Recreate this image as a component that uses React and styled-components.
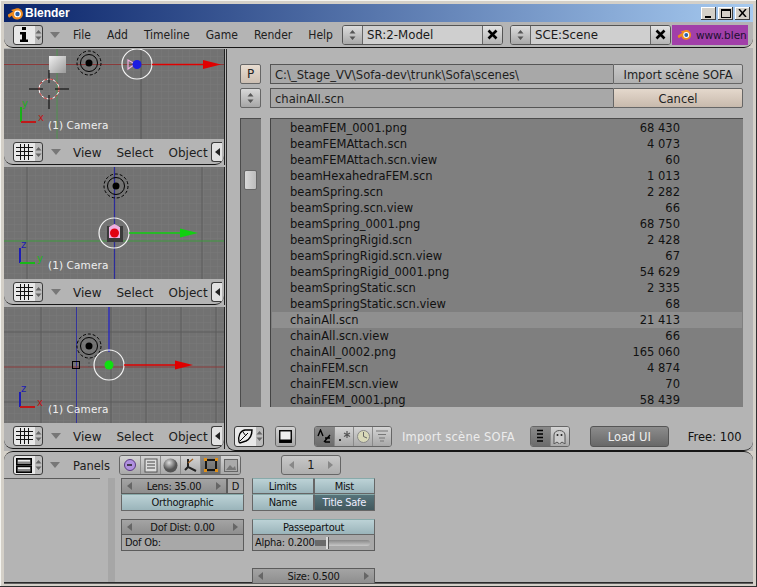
import React from "react";
import styled, { createGlobalStyle, css } from "styled-components";

const Global = createGlobalStyle`
  html, body { margin: 0; padding: 0; background: #d4d0c8; }
  * { box-sizing: border-box; }
  #root { width: 757px; height: 587px; overflow: hidden; }
`;

const UI = `"DejaVu Sans", "Liberation Sans", sans-serif`;
const COND = `"DejaVu Sans Condensed", "DejaVu Sans", "Liberation Sans", sans-serif`;

const Win = styled.div`
  width: 757px; height: 587px; padding: 4px; background: #d4d0c8;
  box-shadow: inset -1px -1px #303030, inset 1px 1px #f4f4f0;
  display: flex; flex-direction: column; overflow: hidden;
  font: 11.5px/16px ${UI}; color: #1a1a1a;
`;
const TitleBar = styled.div`
  height: 18px; flex: none; display: flex; align-items: center; padding: 0 3px 0 3px;
  background: linear-gradient(90deg, #0a246a 0%, #a6caf0 100%);
`;
const TitleText = styled.span`
  font: bold 12px/18px "Liberation Sans", sans-serif; color: #fff; margin-left: 1px; flex: 1;
`;
const WinBtn = styled.div`
  width: 15px; height: 13px; margin-left: 2px; background: #d4d0c8;
  box-shadow: inset -1px -1px #404040, inset 1px 1px #fff;
  display: flex; align-items: center; justify-content: center;
`;
const HeaderBar = styled.div`
  flex: none; height: ${p => p.$h || 26}px; background: #b4b4b4; display: flex; align-items: center;
  padding-left: 9px; position: relative; overflow: hidden;
  border-bottom: 1px solid #161616;
  border-radius: 0 0 9px 9px;
`;
const Selector = styled.div`
  width: 30px; height: 20px; flex: none; border: 1px solid #3c3c3c; border-radius: 3px;
  background: linear-gradient(90deg, #e8e8e8 0 21px, #bcbcbc 21px);
  display: flex; align-items: center; overflow: hidden;
`;
const SelectorIcon = styled.div`
  width: 21px; height: 18px; display: flex; align-items: center; justify-content: center;
`;
const Caret = styled.div`
  width: 0; height: 0; flex: none; margin: 0 ${p => p.$mr ?? 13}px 0 ${p => p.$ml ?? 7}px;
  border-left: 5px solid transparent; border-right: 5px solid transparent; border-top: 6px solid #777;
`;
const MenuRow = styled.div`
  display: flex; flex: none; gap: ${p => p.$gap}px; margin-top: ${p => p.$mt || 0}px;
  font: ${p => p.$font || `12px/16px ${UI}`};
`;
const MenuItem = styled.span` color: #202020; white-space: nowrap; `;
const NameField = styled.div`
  flex: none; width: ${p => p.$w}px; height: 20px; margin-left: ${p => p.$ml || 0}px; display: flex;
  border: 1px solid #555; border-radius: 3px; overflow: hidden; background: #cfcfcf;
`;
const UpDown = styled.div`
  width: ${p => p.$w || 20}px; flex: none; display: flex; align-items: center; justify-content: center;
  background: linear-gradient(#dcdcdc, #a8a8a8); border-right: 1px solid #666;
`;
const NameText = styled.span`
  flex: 1; padding-left: 4px; line-height: 19px; font-size: 11.8px; white-space: nowrap; overflow: hidden;
`;
const CloseBtn = styled.div`
  width: 20px; flex: none; border-left: 1px solid #666; background: linear-gradient(#e2e2e2, #b4b4b4);
  display: flex; align-items: center; justify-content: center;
`;
const Promo = styled.div`
  width: 76px; height: 20px; flex: none; background: #a13fa9; margin-left: 1px; display: flex; align-items: center;
  white-space: nowrap; padding-left: 5px; gap: 4px; color: #1c1030; font-size: 10.5px;
`;
const PartialBtn = styled.div`
  width: 11px; height: 20px; flex: none; margin-left: auto; margin-right: 2px; border: 1px solid #3c3c3c; border-right: 0;
  border-radius: 3px 0 0 3px; background: #e2e2e2; display: flex; align-items: center; padding-left: 3px;
`;
const Workspace = styled.div`
  flex: none; height: 403px; padding-top: 1px; display: flex; gap: 2px; background: #b4b4b4;
`;
const LeftCol = styled.div`
  width: 220px; flex: none; display: flex; flex-direction: column; gap: 2px; background: #b4b4b4;
`;
const ViewBlock = styled.div`
  flex: none; display: flex; flex-direction: column; box-shadow: 1px 0 #222;
`;
const Viewport = styled.div`
  flex: none; width: 220px; height: ${p => p.$h}px; position: relative; background: #727272; overflow: hidden;
`;
const ViewLabel = styled.span`
  position: absolute; left: 44px; bottom: ${p => p.$b}px; color: #efefef; font-size: 10.5px; line-height: 14px; letter-spacing: .1px; white-space: nowrap;
`;
const FilePanel = styled.div`
  flex: 1; min-width: 0; background: #b4b4b4; display: flex; flex-direction: column; padding: 15px 10px 3px 13px;
  border-left: 1px solid #2a2a2a; border-bottom: 1px solid #161616; border-radius: 0 0 9px 9px; height: 402px;
`;
const FileRow = styled.div`
  display: flex; height: 20px; flex: none; margin-bottom: 4px;
`;
const SmallBtn = styled.div`
  width: 21px; flex: none; margin-right: 9px; border: 1px solid #666; border-radius: 2px; display: flex;
  align-items: center; justify-content: center; color: #222; font-size: 12px;
  background: ${p => p.$pink ? "linear-gradient(#e8dcd0, #cdbfb2)" : "linear-gradient(#d8d8d8, #a6a6a6)"};
`;
const PathField = styled.div`
  flex: 1; min-width: 0; border: 1px solid #555; border-right: 0; background: #a8a8a8; padding-left: 4px; line-height: 20px; color: #1e1e1e; font-size: 11.6px; white-space: nowrap; overflow: hidden;
`;
const ActionBtn = styled.div`
  width: 130px; flex: none; text-align: center; line-height: 20px; border: 1px solid #666; border-radius: 0 2px 2px 0; color: #222;
  background: ${p => p.$pink ? "linear-gradient(#e4d8cc, #c8baad)" : "linear-gradient(#c8c8c8, #b0b0b0)"};
`;
const ListArea = styled.div`
  display: flex; flex: none; height: 289px; margin-top: 6px;
`;
const ScrollCol = styled.div`
  width: 21px; flex: none; margin-right: 9px; background: #7c7c7c; border: 1px solid #4c4c4c; border-bottom: 0; border-right: 0; padding: 51px 0 0 3px;
`;
const Thumb = styled.div`
  width: 13px; height: 20px; background: linear-gradient(90deg, #d8d8d8, #bcbcbc); border: 1px solid #666; border-radius: 2px;
`;
const List = styled.div`
  flex: 1; min-width: 0; background: #7f7f7f; border-top: 1px solid #4c4c4c; border-left: 1px solid #444; padding-top: 1px; overflow: hidden;
`;
const Row = styled.div`
  height: 16px; display: flex; line-height: 16px; color: #111; margin: 0 1px; padding: 0 62px 0 18px;
  ${p => p.$on && css`background: #8f8f8f;`}
`;
const RowName = styled.span` flex: 1; white-space: nowrap; `;
const RowSize = styled.span` white-space: nowrap; `;
const Footer = styled.div`
  height: 22px; flex: none; margin-top: 18px; margin-left: -6px; display: flex; align-items: center; white-space: nowrap;
`;
const IconSelect = styled(Selector)` width: 30px; height: 21px; `;
const IconGroup = styled.div`
  display: flex; flex: none; margin-left: ${p => p.$ml}px; border: 1px solid #666; border-radius: 3px; overflow: hidden; height: ${p => p.$h || 21}px;
`;
const IconCell = styled.div`
  width: ${p => p.$w || 19}px; display: flex; align-items: center; justify-content: center;
  background: ${p => p.$on ? "linear-gradient(#8a8a8a, #6c6c6c)" : "linear-gradient(#d4d4d4, #a8a8a8)"};
  & + & { border-left: 1px solid #8a8a8a; }
`;
const FooterTitle = styled.span` color: #ececec; margin: 2px 0 0 10px; letter-spacing: .22px; `;
const LoadBtn = styled.div`
  width: 79px; height: 21px; margin-left: 20px; border: 1px solid #555; border-radius: 3px; color: #eee; text-align: center; line-height: 20px;
  background: linear-gradient(#8c8c8c, #686868);
`;
const FreeText = styled.span` margin: 2px 0 0 19px; color: #111; `;
const BottomHeader = styled(HeaderBar)`
  height: 27px; border-bottom: 0; border-radius: 9px 9px 0 0;
  border-top: 1px solid #161616;
`;
const PanelsLabel = styled(MenuItem)` margin-top: 2px; `;
const PageBox = styled.div`
  width: 60px; height: 20px; margin-left: 40px; flex: none; border: 1px solid #666; border-radius: 3px; display: flex; align-items: center;
  justify-content: space-between; padding: 0 7px; background: linear-gradient(#c8c8c8, #aeaeae);
`;
const Props = styled.div`
  flex: 1; min-height: 0; display: flex; background: #b4b4b4; border-bottom: 1px solid #2a2a2a; box-shadow: 0 1px #606060;
`;
const PropSpacer = styled.div`
  width: 104px; flex: none; position: relative;
  &::before { content: ""; position: absolute; left: 0; top: 0; width: 96px; height: 1px; background: #5a5a5a; }
`;
const PropStrip = styled.div` width: 7px; flex: none; background: #a6a6a6; `;
const PropGrid = styled.div`
  flex: 1; display: grid; grid-template-columns: 123px 123px; column-gap: 8px; padding-left: 6px; align-content: start;
  font: 11px/15px ${COND}; letter-spacing: -.28px;
`;
const PropCol = styled.div` display: flex; flex-direction: column; `;
const BtnRow = styled.div`
  display: flex; height: ${p => p.$h || 16}px; margin-top: ${p => p.$mt || 0}px; flex: none;
`;
const TealBtn = styled.div`
  flex: 1; text-align: center; border: 1px solid #666; border-top-color: #8aa; white-space: nowrap; overflow: hidden;
  background: ${p => p.$on ? "linear-gradient(#56747a, #42585e)" : "linear-gradient(#bcd2d6, #9ab4ba)"};
  color: ${p => p.$on ? "#eef" : "#111"};
`;
const NumBtn = styled.div`
  flex: ${p => p.$w ? `0 0 ${p.$w}px` : 1}; display: flex; align-items: center; justify-content: ${p => p.$center ? "center" : "space-between"};
  padding: ${p => p.$center ? 0 : "0 5px"};
  border: 1px solid #5c5c5c; white-space: nowrap; overflow: hidden; color: #111;
  background: ${p => p.$flat ? "#ababab" : "linear-gradient(#a4a4a4, #8e8e8e)"};
`;
const FieldBtn = styled.div`
  flex: 1; border: 1px solid #5c5c5c; border-top: 0; background: #a8a8a8; padding-left: 3px; white-space: nowrap; color: #111;
`;
const SliderBtn = styled(FieldBtn)` padding-left: 2px; display: flex; align-items: center; `;
const SliderTrack = styled.div`
  flex: 1; height: 6px; margin: 0 4px 0 0; position: relative; background: linear-gradient(#888, #c8c8c8); border-radius: 3px;
`;
const SliderFill = styled.div`
  position: absolute; left: 0; top: 0; height: 6px; background: #6a6a6a;
`;
const SliderKnob = styled.div`
  position: absolute; top: -3px; width: 3px; height: 12px; background: #dcdcdc; border-right: 1px solid #555;
`;
const SelArrowWrap = styled.span` margin-left: 1px; display: flex; `;

const Tri = ({ dir, c = "#666" }) => (
  <svg width="5" height="8" viewBox="0 0 5 8" style={{ flex: "none" }}>
    <path d={dir === "l" ? "M5 0V8L0 4Z" : "M0 0V8L5 4Z"} fill={c} />
  </svg>
);
const Arrows = ({ c = "#555" }) => (
  <svg width="7" height="10" viewBox="0 0 7 10"><path d="M3.5 0L6.5 3.5H.5ZM3.5 10L.5 6.5H6.5Z" fill={c} /></svg>
);
const SelArrows = () => <SelArrowWrap><Arrows c="#666" /></SelArrowWrap>;

const GridGlyph = () => (
  <svg width="17" height="16" viewBox="0 0 17 16"><path d="M4.5 0V16M8.5 0V16M12.5 0V16M0 3.5H17M0 7.5H17M0 11.5H17" stroke="#111" strokeWidth="1" /></svg>
);
const InfoGlyph = () => (
  <svg width="10" height="15" viewBox="0 0 10 15"><path d="M3 0h4v3H3zM1 5h6v7.5h2V15H1v-2.5h2V7.5H1z" fill="#000" /></svg>
);
const PanelsGlyph = () => (
  <svg width="16" height="15" viewBox="0 0 16 15"><rect x=".75" y=".75" width="14.5" height="6" fill="#888" stroke="#000" strokeWidth="1.5" /><rect x=".75" y="8.25" width="14.5" height="6" fill="#888" stroke="#000" strokeWidth="1.5" /><rect x="2" y="2" width="12" height="1.5" fill="#eee" /><rect x="2" y="9.5" width="12" height="1.5" fill="#eee" /></svg>
);
const XGlyph = () => <svg width="11" height="11" viewBox="0 0 11 11"><path d="M1.5 1.5L9.5 9.5M9.5 1.5L1.5 9.5" stroke="#000" strokeWidth="2.6" /></svg>;

const BlenderLogo = ({ s = 17 }) => (
  <svg width={s} height={s * 0.82} viewBox="0 0 17 14" style={{ flex: "none" }}>
    <path d="M1 8.5L6 5.5L4 4L9 2.5C12.5 1.5 16 4 16 8C16 11.5 13 13.5 10 13.5C7.5 13.5 5.5 12 5 9.5L2.5 11.5C1.5 12 .5 9 1 8.5Z" fill="#f08a1d" />
    <circle cx="10.5" cy="8" r="3.4" fill="#fff" />
    <circle cx="10.5" cy="8" r="2.2" fill="#2a5fa8" />
  </svg>
);

const Lamp = ({ x, y }) => (
  <g>
    <circle cx={x} cy={y} r="3.5" fill="#000" />
    <circle cx={x} cy={y} r="8.5" fill="none" stroke="#000" strokeWidth="1" />
    <circle cx={x} cy={y} r="12" fill="none" stroke="#000" strokeWidth="1" strokeDasharray="3 2" />
  </g>
);
const Ring = ({ x, y }) => <circle cx={x} cy={y} r="15" fill="none" stroke="#f4f4f4" strokeWidth="1.2" />;
const Arrow = ({ x1, x2, y, c }) => (
  <g>
    <line x1={x1} x2={x2} y1={y} y2={y} stroke={c} strokeWidth="1.4" />
    <path d={`M${x2} ${y - 4.5}L${x2 + 18} ${y}L${x2} ${y + 4.5}Z`} fill={c} />
  </g>
);
const ViewPattern = ({ id }) => (
  <pattern id={id} width="7" height="7" patternUnits="userSpaceOnUse">
    <path d="M7 0H0V7" fill="none" stroke="#797979" strokeWidth="1" />
  </pattern>
);
const Axes = ({ x, y, up, right, uc, rc }) => (
  <g fontFamily="DejaVu Sans" fontSize="10">
    <line x1={x} x2={x} y1={y} y2={y - 15} stroke={uc} strokeWidth="2" />
    <line x1={x} x2={x + 15} y1={y} y2={y} stroke={rc} strokeWidth="2" />
    <text x={x + 1} y={y - 15} fill={uc}>{up}</text>
    <text x={x + 17} y={y - 1} fill={rc}>{right}</text>
  </g>
);

const View1Art = () => (
  <svg width="220" height="90" viewBox="4 49 220 90" style={{ display: "block" }}>
    <defs><ViewPattern id="g1" /><linearGradient id="cube" x1="0" y1="0" x2="1" y2="1"><stop offset="0" stopColor="#f0f0f0" /><stop offset="1" stopColor="#9a9a9a" /></linearGradient></defs>
    <rect x="4" y="49" width="220" height="90" fill="url(#g1)" />
    <line x1="57" x2="57" y1="49" y2="139" stroke="#4f8f4f" strokeWidth="1" />
    <line x1="141" x2="141" y1="49" y2="139" stroke="#555" strokeWidth="1" />
    <line x1="4" x2="224" y1="64.5" y2="64.5" stroke="#8a3a3a" strokeWidth="1" />
    <rect x="49" y="56" width="17" height="17" fill="url(#cube)" />
    <Lamp x={89} y={63} />
    <Ring x={137} y={64} />
    <path d="M128 60L135 64L128 69Z" fill="none" stroke="#f0b0e0" strokeWidth="1.2" />
    <circle cx="137" cy="64.5" r="4.5" fill="#1c1ce0" />
    <Arrow x1={152} x2={203} y={64.5} c="#e00000" />
    <circle cx="49" cy="89" r="10" fill="none" stroke="#fff" strokeWidth="1" />
    <circle cx="49" cy="89" r="10" fill="none" stroke="#c02020" strokeWidth="1" strokeDasharray="3 3" />
    <path d="M49 70V83M49 95V109M29 89H43M55 89H69" stroke="#000" strokeWidth="1" />
    <Axes x={21} y={122} up="y" right="x" uc="#18b018" rc="#c01818" />
  </svg>
);
const View2Art = () => (
  <svg width="220" height="112" viewBox="4 167 220 112" style={{ display: "block" }}>
    <defs><ViewPattern id="g2" /></defs>
    <rect x="4" y="167" width="220" height="112" fill="url(#g2)" />
    <path d="M27 167V279M202 167V279" stroke="#5c5c5c" strokeWidth="1" />
    <line x1="114.5" x2="114.5" y1="167" y2="279" stroke="#2c2c9c" strokeWidth="1.2" />
    <line x1="4" x2="224" y1="241" y2="241" stroke="#3c9c3c" strokeWidth="1" />
    <Lamp x={116} y={186} />
    <Ring x={114} y={233} />
    <rect x="107" y="226" width="16" height="16" fill="#3a3a3a" />
    <path d="M109 227L114.5 224L120 227V238H109Z" fill="#f0b0e0" />
    <circle cx="114.5" cy="233" r="4.5" fill="#e00010" />
    <Arrow x1={129} x2={180} y={233} c="#10d010" />
    <Axes x={20} y={263} up="z" right="y" uc="#1c1cb4" rc="#18b818" />
  </svg>
);
const View3Art = () => (
  <svg width="220" height="116" viewBox="4 307 220 116" style={{ display: "block" }}>
    <defs><ViewPattern id="g3" /></defs>
    <rect x="4" y="307" width="220" height="116" fill="url(#g3)" />
    <path d="M41 307V423M111 307V423M146 307V423M181 307V423M216 307V423M4 332H224M4 402H224" stroke="#5c5c5c" strokeWidth="1" />
    <line x1="76.5" x2="76.5" y1="307" y2="423" stroke="#34349c" strokeWidth="1" />
    <line x1="109" x2="109" y1="307" y2="352" stroke="#2a2ac0" strokeWidth="1.4" />
    <line x1="4" x2="224" y1="367" y2="367" stroke="#8a3a3a" strokeWidth="1" />
    <Lamp x={89} y={346} />
    <line x1="89" x2="89" y1="358" y2="367" stroke="#555" strokeDasharray="2 2" />
    <rect x="72.5" y="361.5" width="7" height="7" fill="none" stroke="#000" strokeWidth="1" />
    <Ring x={109} y={365} />
    <circle cx="109" cy="365" r="4.5" fill="#10e010" />
    <Arrow x1={124} x2={175} y={365} c="#e00000" />
    <Axes x={20} y={407} up="z" right="x" uc="#1c1cb4" rc="#c01818" />
  </svg>
);

const ViewHeader = () => (
  <HeaderBar>
    <Selector><SelectorIcon><GridGlyph /></SelectorIcon><SelArrows /></Selector>
    <Caret $ml={8} $mr={12} />
    <MenuRow $gap={15} $mt={2}>
      <MenuItem>View</MenuItem><MenuItem>Select</MenuItem><MenuItem>Object</MenuItem>
    </MenuRow>
    <PartialBtn><Tri dir="l" c="#222" /></PartialBtn>
  </HeaderBar>
);

const files = [
  ["beamFEM_0001.png", "68 430"], ["beamFEMAttach.scn", "4 073"], ["beamFEMAttach.scn.view", "60"],
  ["beamHexahedraFEM.scn", "1 013"], ["beamSpring.scn", "2 282"], ["beamSpring.scn.view", "66"],
  ["beamSpring_0001.png", "68 750"], ["beamSpringRigid.scn", "2 428"], ["beamSpringRigid.scn.view", "67"],
  ["beamSpringRigid_0001.png", "54 629"], ["beamSpringStatic.scn", "2 335"], ["beamSpringStatic.scn.view", "68"],
  ["chainAll.scn", "21 413"], ["chainAll.scn.view", "66"], ["chainAll_0002.png", "165 060"],
  ["chainFEM.scn", "4 874"], ["chainFEM.scn.view", "70"], ["chainFEM_0001.png", "58 439"],
];

export default function App() {
  return (
    <Win>
      <Global />
      <TitleBar>
        <BlenderLogo s={17} />
        <TitleText>Blender</TitleText>
        <WinBtn><svg width="9" height="9"><rect x="1" y="7" width="6" height="2" fill="#000" /></svg></WinBtn>
        <WinBtn><svg width="10" height="9"><rect x=".5" y=".5" width="9" height="8" fill="none" stroke="#000" /><rect y="0" width="10" height="2" fill="#000" /></svg></WinBtn>
        <WinBtn><svg width="9" height="8"><path d="M1 0L8 8M8 0L1 8" stroke="#000" strokeWidth="1.5" /></svg></WinBtn>
      </TitleBar>

      <HeaderBar>
        <Selector><SelectorIcon><InfoGlyph /></SelectorIcon><SelArrows /></Selector>
        <Caret />
        <MenuRow $gap={16} $mt={1} $font={`12px/16px ${COND}`}>
          <MenuItem>File</MenuItem><MenuItem>Add</MenuItem><MenuItem>Timeline</MenuItem>
          <MenuItem>Game</MenuItem><MenuItem>Render</MenuItem><MenuItem>Help</MenuItem>
        </MenuRow>
        <NameField $w={161} $ml={9}>
          <UpDown><Arrows /></UpDown><NameText>SR:2-Model</NameText><CloseBtn><XGlyph /></CloseBtn>
        </NameField>
        <NameField $w={161} $ml={7}>
          <UpDown><Arrows /></UpDown><NameText>SCE:Scene</NameText><CloseBtn><XGlyph /></CloseBtn>
        </NameField>
        <Promo><BlenderLogo s={15} /><span>www.blen</span></Promo>
      </HeaderBar>

      <Workspace>
        <LeftCol>
          <ViewBlock>
            <Viewport $h={90}><View1Art /><ViewLabel $b={7}>(1) Camera</ViewLabel></Viewport>
            <ViewHeader />
          </ViewBlock>
          <ViewBlock>
            <Viewport $h={112}><View2Art /><ViewLabel $b={7}>(1) Camera</ViewLabel></Viewport>
            <ViewHeader />
          </ViewBlock>
          <ViewBlock>
            <Viewport $h={116}><View3Art /><ViewLabel $b={7}>(1) Camera</ViewLabel></Viewport>
            <ViewHeader />
          </ViewBlock>
        </LeftCol>

        <FilePanel>
          <FileRow>
            <SmallBtn $pink>P</SmallBtn>
            <PathField>C:\_Stage_VV\Sofa-dev\trunk\Sofa\scenes\</PathField>
            <ActionBtn>Import scène SOFA</ActionBtn>
          </FileRow>
          <FileRow>
            <SmallBtn><Arrows /></SmallBtn>
            <PathField>chainAll.scn</PathField>
            <ActionBtn $pink>Cancel</ActionBtn>
          </FileRow>
          <ListArea>
            <ScrollCol><Thumb /></ScrollCol>
            <List>
              {files.map(([n, s]) => (
                <Row key={n} $on={n === "chainAll.scn"}>
                  <RowName>{n}</RowName><RowSize>{s}</RowSize>
                </Row>
              ))}
            </List>
          </ListArea>
          <Footer>
            <IconSelect>
              <SelectorIcon>
                <svg width="17" height="16" viewBox="0 0 17 16"><path d="M2 14C1 8 3 3 8 2L15 2C15 7 13 11 9 13L3 15Z" fill="#eee" stroke="#000" strokeWidth="1.4" /><path d="M3 13L11 5M6 4L9 8" stroke="#000" /></svg>
              </SelectorIcon>
              <SelArrows />
            </IconSelect>
            <IconGroup $ml={11}>
              <IconCell $w={19}><svg width="13" height="13"><rect x=".75" y=".75" width="11.5" height="11.5" fill="#eee" stroke="#000" strokeWidth="1.4" /><rect x="1" y="9.5" width="11" height="3" fill="#000" /></svg></IconCell>
            </IconGroup>
            <IconGroup $ml={18}>
              <IconCell $on><svg width="15" height="14"><path d="M1 7L3.5 1L6 7M7 13L13 6M8 9H13M8 13H13" fill="none" stroke="#000" strokeWidth="1.4" /></svg></IconCell>
              <IconCell><svg width="15" height="14"><rect x="2" y="10" width="2" height="2" fill="#333" /><path d="M10 2V9M7 4L13 7.5M13 4L7 7.5" stroke="#555" strokeWidth="1.2" /></svg></IconCell>
              <IconCell><svg width="15" height="15"><circle cx="7.5" cy="7.5" r="6" fill="#d8d8b8" stroke="#888" /><path d="M7.5 3V7.5L11 9" fill="none" stroke="#666" /></svg></IconCell>
              <IconCell><svg width="14" height="12"><path d="M1 1H13M3 4.5H11M4 8H10M5 11H9" stroke="#777" /></svg></IconCell>
            </IconGroup>
            <FooterTitle>Import scène SOFA</FooterTitle>
            <IconGroup $ml={15}>
              <IconCell $on><svg width="6" height="14"><path d="M0 1.5H6M0 5H6M0 8.5H6M0 12H6" stroke="#000" strokeWidth="1.6" /></svg></IconCell>
              <IconCell><svg width="13" height="15"><path d="M1 15V6C1 0 12 0 12 6V15L9 13L6.5 15L4 13Z" fill="#ccc" stroke="#555" /><circle cx="4.5" cy="6" r="1" fill="#222" /><circle cx="8.5" cy="6" r="1" fill="#222" /></svg></IconCell>
            </IconGroup>
            <LoadBtn>Load UI</LoadBtn>
            <FreeText>Free: 100</FreeText>
          </Footer>
        </FilePanel>
      </Workspace>

      <BottomHeader>
        <Selector><SelectorIcon><PanelsGlyph /></SelectorIcon><SelArrows /></Selector>
        <Caret />
        <PanelsLabel>Panels</PanelsLabel>
        <IconGroup $ml={9} $h={20}>
          <IconCell $w={20}><svg width="14" height="14"><circle cx="7" cy="7" r="5.5" fill="#b090e0" stroke="#5a3a80" /><path d="M4 7H9" stroke="#222" strokeWidth="1.6" /></svg></IconCell>
          <IconCell $w={20}><svg width="14" height="15"><rect x="1" y="1" width="12" height="13" fill="#ddd" stroke="#555" /><path d="M3 4H11M3 7H11M3 10H11" stroke="#444" /></svg></IconCell>
          <IconCell $w={20}><svg width="15" height="15"><defs><radialGradient id="sph" cx=".4" cy=".3"><stop offset="0" stopColor="#ddd" /><stop offset="1" stopColor="#555" /></radialGradient></defs><circle cx="7.5" cy="7.5" r="7" fill="url(#sph)" /></svg></IconCell>
          <IconCell $w={20}><svg width="15" height="15"><path d="M5 1V9L13 13M5 9L2 12" fill="none" stroke="#222" strokeWidth="2" /><path d="M5 5L10 1" stroke="#a06020" strokeWidth="1.4" /></svg></IconCell>
          <IconCell $w={20} $on><svg width="14" height="14"><rect x="2" y="2" width="10" height="10" fill="none" stroke="#000" strokeWidth="1.6" /><path d="M0 0h3v3H0zM11 0h3v3h-3zM0 11h3v3H0zM11 11h3v3h-3z" fill="#e09018" /></svg></IconCell>
          <IconCell $w={20}><svg width="14" height="13"><rect x=".5" y=".5" width="13" height="12" fill="#aaa" stroke="#666" /><path d="M2 11L6 6L9 9L11 7L12 11Z" fill="#777" /></svg></IconCell>
        </IconGroup>
        <PageBox><Tri dir="l" c="#888" /><span>1</span><Tri dir="r" c="#888" /></PageBox>
      </BottomHeader>

      <Props>
        <PropSpacer />
        <PropStrip />
        <PropGrid>
          <PropCol>
            <BtnRow>
              <NumBtn><Tri dir="l" /><span>Lens: 35.00</span><Tri dir="r" /></NumBtn>
              <NumBtn $w={17} $flat $center>D</NumBtn>
            </BtnRow>
            <BtnRow $h={17}><TealBtn>Orthographic</TealBtn></BtnRow>
            <BtnRow $mt={8}><NumBtn><Tri dir="l" /><span>Dof Dist: 0.00</span><Tri dir="r" /></NumBtn></BtnRow>
            <BtnRow><FieldBtn>Dof Ob:</FieldBtn></BtnRow>
          </PropCol>
          <PropCol>
            <BtnRow><TealBtn>Limits</TealBtn><TealBtn>Mist</TealBtn></BtnRow>
            <BtnRow $h={17}><TealBtn>Name</TealBtn><TealBtn $on>Title Safe</TealBtn></BtnRow>
            <BtnRow $mt={8}><TealBtn>Passepartout</TealBtn></BtnRow>
            <BtnRow>
              <SliderBtn>
                <span>Alpha: 0.200</span>
                <SliderTrack>
                  <SliderFill style={{ width: "20%" }} />
                  <SliderKnob style={{ left: "20%" }} />
                </SliderTrack>
              </SliderBtn>
            </BtnRow>
            <BtnRow $mt={17}><NumBtn><Tri dir="l" /><span>Size: 0.500</span><Tri dir="r" /></NumBtn></BtnRow>
          </PropCol>
        </PropGrid>
      </Props>
    </Win>
  );
}
